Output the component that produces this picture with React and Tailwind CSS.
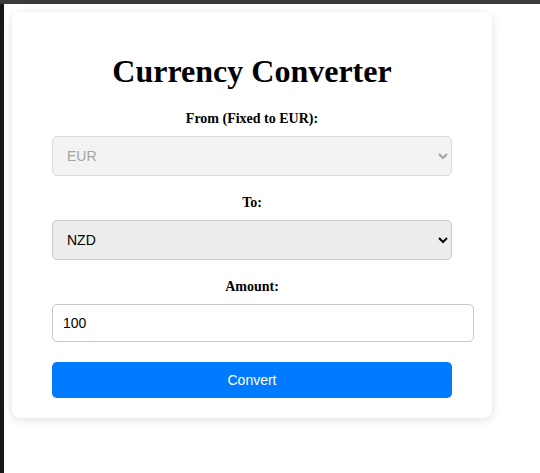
import React, { useState } from "react";

const App = () => {
  const [to, setTo] = useState("NZD");
  const [amount, setAmount] = useState("100");

  return (
    <div className="min-h-[473px] flex flex-col bg-white" style={{ fontFamily: '"Liberation Serif", "Times New Roman", serif' }}>
      <div className="h-[4px] bg-[#3b3b3b]"></div>
      <div className="flex flex-1">
        <div className="w-[4px] bg-[#1b1419]"></div>
        <div className="p-[8px]">
          <div className="w-[480px] bg-white rounded-[8px] shadow-[0_2px_10px_rgba(0,0,0,0.12)] px-[40px] py-[20px]">
            <h1 className="text-[32px] leading-[37px] font-bold text-black text-center my-[21px]">
              Currency Converter
            </h1>

            <label className="block text-center font-bold text-[14px] leading-[16px] mb-[9px]">
              From (Fixed to EUR):
            </label>
            <select
              disabled
              value="EUR"
              className="block w-[400px] h-[40px] px-[10px] text-[14px] font-['Liberation_Sans',Arial,sans-serif] bg-[#f3f3f3] text-[#a3a3a3] border border-[#dcdcdc] rounded-[5px] opacity-100 mb-[19px]"
            >
              <option value="EUR">EUR</option>
            </select>

            <label className="block text-center font-bold text-[14px] leading-[16px] mb-[9px]">
              To:
            </label>
            <select
              value={to}
              onChange={(e) => setTo(e.target.value)}
              className="block w-[400px] h-[40px] px-[10px] text-[14px] font-['Liberation_Sans',Arial,sans-serif] bg-[#ededed] text-black border border-[#c8c8c8] rounded-[5px] mb-[19px]"
            >
              <option value="USD">USD</option>
              <option value="GBP">GBP</option>
              <option value="AUD">AUD</option>
              <option value="NZD">NZD</option>
            </select>

            <label className="block text-center font-bold text-[14px] leading-[16px] mb-[9px]">
              Amount:
            </label>
            <input
              type="number"
              value={amount}
              onChange={(e) => setAmount(e.target.value)}
              className="block w-[422px] h-[38px] px-[10px] text-[14px] font-['Liberation_Sans',Arial,sans-serif] text-black bg-white border border-[#c8c8c8] rounded-[5px] mb-[20px] outline-none"
            />

            <button className="block w-[400px] h-[36px] bg-[#007bff] text-white text-[14px] font-['Liberation_Sans',Arial,sans-serif] rounded-[5px]">
              Convert
            </button>
          </div>
        </div>
      </div>
    </div>
  );
};

export default App;
